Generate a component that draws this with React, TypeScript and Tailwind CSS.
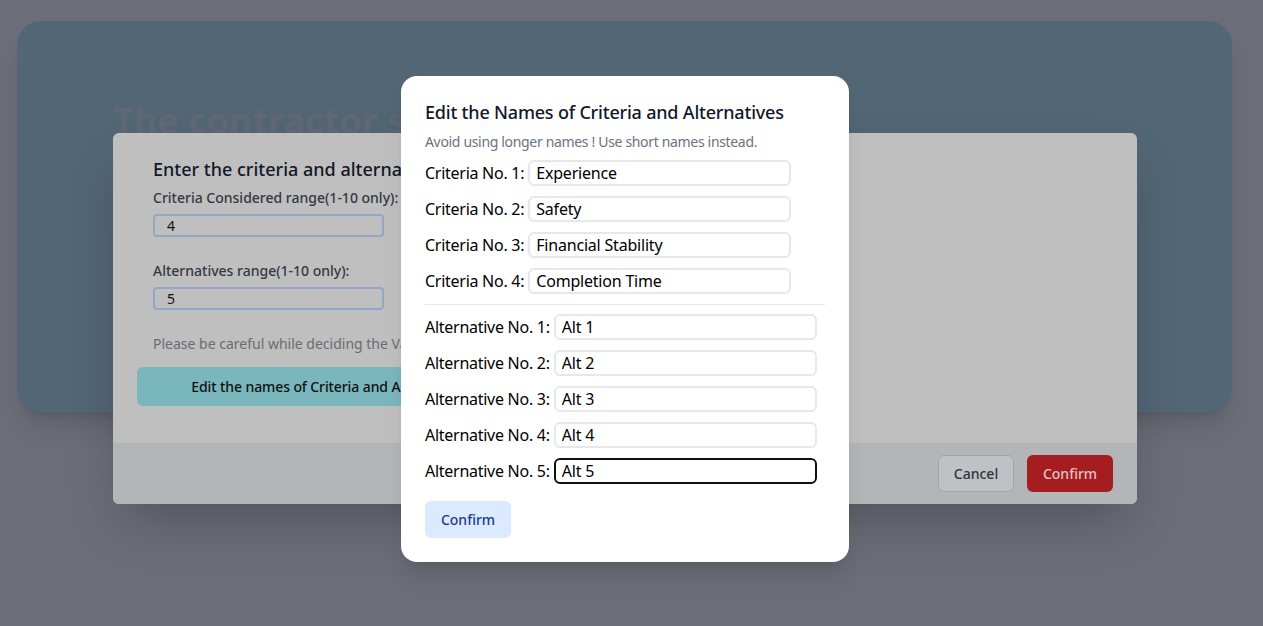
const criteria = ["Experience", "Safety", "Financial Stability", "Completion Time"];
const alternatives = ["Alt 1", "Alt 2", "Alt 3", "Alt 4", "Alt 5"];

export default function App() {
  return (
    <div className="relative min-h-screen w-full overflow-hidden bg-[#6b6e78] font-['Noto_Sans',sans-serif]">
      {/* page card behind the dialogs */}
      <div className="mx-[17px] pt-[21px]">
        <div className="h-[391px] w-[1215px] rounded-3xl bg-[#536676] px-24 pt-[80px] shadow-xl">
          <h1 className="text-4xl font-bold text-[#606875]">The contractor selection</h1>
        </div>
      </div>

      {/* first dialog (dimmed) */}
      <div className="absolute left-[113px] top-[133px] w-[1024px] overflow-hidden rounded-md bg-[#bfbfbf] shadow-2xl">
        <div className="px-6 pt-6 pb-[37px]">
          <div className="px-4">
            <h3 className="text-lg leading-6 font-medium text-[#111827]">Enter the criteria and alternatives</h3>
            <label className="mt-[7px] block text-sm font-medium text-[#333842]">Criteria Considered range(1-10 only):</label>
            <input
              readOnly
              value="4"
              className="mt-[6px] block h-[23px] w-[231px] rounded-sm border-2 border-[#93a6c8] bg-[#bfbfbf] px-3 text-sm text-[#111]"
            />
            <label className="mt-[24px] block text-sm font-medium text-[#333842]">Alternatives range(1-10 only):</label>
            <input
              readOnly
              value="5"
              className="mt-[6px] block h-[23px] w-[231px] rounded-sm border-2 border-[#93a6c8] bg-[#bfbfbf] px-3 text-sm text-[#111]"
            />
            <p className="mt-[24px] text-sm text-[#6b6c70]">
              Please be careful while deciding the Values of criteria and alternatives.
            </p>
          </div>
          <button className="mt-[13px] h-[39px] w-[388px] rounded-md bg-[#7ab7bd] text-sm font-medium tracking-[-0.1px] text-[#111]">
            Edit the names of Criteria and Alternatives
          </button>
        </div>
        <div className="flex h-[61px] items-center justify-end gap-[13px] bg-[#b4b5b9] px-6">
          <button className="h-[37px] w-[76px] rounded-md border border-[#a2a4a8] bg-[#c0c1c4] text-sm font-medium text-[#2d3340]">
            Cancel
          </button>
          <button className="h-[37px] w-[86px] rounded-md bg-[#a51d1e] text-sm font-medium text-[#e2c4c4]">
            Confirm
          </button>
        </div>
      </div>

      {/* edit names dialog */}
      <div className="absolute left-[401px] top-[76px] w-[448px] rounded-2xl bg-white p-6 shadow-xl">
        <h3 className="-mt-[2px] text-lg leading-7 font-medium tracking-[-0.2px] text-[#111827]">
          Edit the Names of Criteria and Alternatives
        </h3>
        <p className="mt-[6px] text-sm tracking-[-0.33px] text-[#6b7280]">Avoid using longer names ! Use short names instead.</p>
        <div className="mt-2 flex flex-col gap-[10px]">
          {criteria.map((c, i) => (
            <div key={c} className="flex items-center gap-1">
              <span className="text-base tracking-[-0.27px] text-black">Criteria No. {i + 1}:</span>
              <input
                readOnly
                value={c}
                className="h-[26px] w-[263px] rounded-md border-2 border-[#e5e7eb] px-[6px] text-base tracking-[-0.2px] text-black"
              />
            </div>
          ))}
        </div>
        <hr className="mt-[10px] mb-[9px] border-[#e5e7eb]" />
        <div className="flex flex-col gap-[10px]">
          {alternatives.map((a, i) => (
            <div key={a} className="flex items-center gap-1">
              <span className="text-base tracking-[-0.27px] text-black">Alternative No. {i + 1}:</span>
              <input
                readOnly
                value={a}
                className={
                  i === alternatives.length - 1
                    ? "h-[26px] w-[263px] rounded-md border-2 border-[#111] px-[6px] text-base tracking-[-0.2px] text-black"
                    : "h-[26px] w-[263px] rounded-md border-2 border-[#e5e7eb] px-[6px] text-base tracking-[-0.2px] text-black"
                }
              />
            </div>
          ))}
        </div>
        <button className="mt-[17px] h-[37px] w-[86px] rounded-md bg-[#dbeafe] text-sm font-medium text-[#1e3a8a]">
          Confirm
        </button>
      </div>
    </div>
  );
}
